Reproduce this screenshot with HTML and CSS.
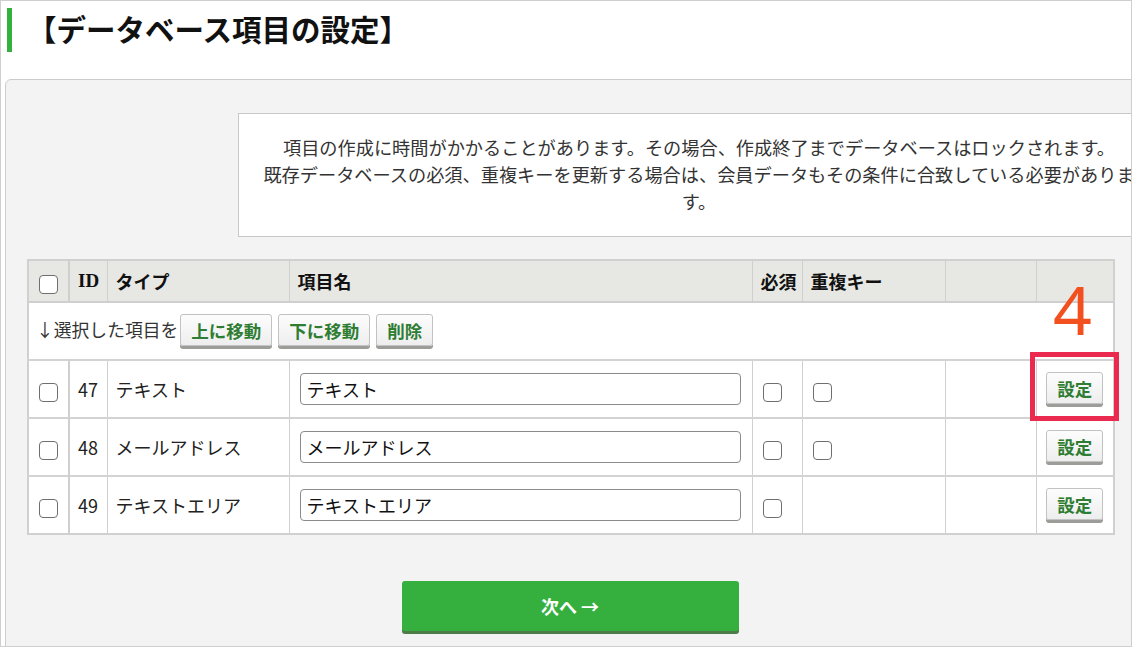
FILE: index.html
```html
<!DOCTYPE html>
<html lang="ja">

<head>
    <meta charset="utf-8">
    <meta name="viewport" content="width=device-width, initial-scale=1.0">
    <title>データベース項目の設定</title>
    <link rel="stylesheet" href="styles.css">
</head>

<body>
    <div class="page">
        <h1 class="titel">【データベース項目の設定】</h1>

        <section class="panel">
            <div class="notice">
                <p>項目の作成に時間がかかることがあります。その場合、作成終了までデータベースはロックされます。</p>
                <p>既存データベースの必須、重複キーを更新する場合は、会員データもその条件に合致している必要があります。</p>
            </div>

            <div class="tabel-wrap">
                <table class="felter">
                    <colgroup>
                        <col style="width:41px">
                        <col style="width:38px">
                        <col style="width:182px">
                        <col style="width:463px">
                        <col style="width:50px">
                        <col style="width:143px">
                        <col style="width:91px">
                        <col style="width:78px">
                    </colgroup>
                    <thead>
                        <tr>
                            <th class="midt"><input type="checkbox" class="boks"></th>
                            <th class="id">ID</th>
                            <th>タイプ</th>
                            <th>項目名</th>
                            <th>必須</th>
                            <th>重複キー</th>
                            <th></th>
                            <th></th>
                        </tr>
                    </thead>
                    <tbody>
                        <tr class="handling">
                            <td colspan="8">↓選択した項目を<button class="knap">上に移動</button>
                                <button class="knap">下に移動</button>
                                <button class="knap">削除</button>
                            </td>
                        </tr>
                        <tr>
                            <td class="midt"><input type="checkbox" class="boks"></td>
                            <td>47</td>
                            <td>テキスト</td>
                            <td class="navn"><input type="text" value="テキスト"></td>
                            <td class="flag"><input type="checkbox" class="boks"></td>
                            <td class="flag"><input type="checkbox" class="boks"></td>
                            <td></td>
                            <td class="midt"><button class="knap">設定</button></td>
                        </tr>
                        <tr>
                            <td class="midt"><input type="checkbox" class="boks"></td>
                            <td>48</td>
                            <td>メールアドレス</td>
                            <td class="navn"><input type="text" value="メールアドレス"></td>
                            <td class="flag"><input type="checkbox" class="boks"></td>
                            <td class="flag"><input type="checkbox" class="boks"></td>
                            <td></td>
                            <td class="midt"><button class="knap">設定</button></td>
                        </tr>
                        <tr>
                            <td class="midt"><input type="checkbox" class="boks"></td>
                            <td>49</td>
                            <td>テキストエリア</td>
                            <td class="navn"><input type="text" value="テキストエリア"></td>
                            <td class="flag"><input type="checkbox" class="boks"></td>
                            <td></td>
                            <td></td>
                            <td class="midt"><button class="knap">設定</button></td>
                        </tr>
                    </tbody>
                </table>

                <div class="naeste">
                    <button class="gaa">次へ →</button>
                </div>
            </div>
        </section>

        <!-- markering oven på skærmbilledet -->
        <span class="trin">4</span>
        <span class="ramme"></span>
    </div>
</body></html>
```

FILE: styles.css
```css
* {
    padding: 0;
    margin: 0;
    box-sizing: border-box;
}

body {
    font-family: "Noto Sans CJK JP", "Noto Sans", sans-serif;
    color: #222;
    background-color: white;
    overflow: hidden;
}

.page {
    position: relative;
    width: 1132px;
    height: 647px;
    border: 1px solid #cfcfcf;
    overflow: hidden;
}

.titel {
    margin: 7px 0 0 6px;
    height: 44px;
    line-height: 40px;
    border-left: 5px solid #35b03f;
    padding-left: 15px;
    font-size: 29.5px;
    font-weight: 700;
    color: #111;
}

.panel {
    margin: 27px 0 0 4px;
    width: 1160px;
    height: 620px;
    background-color: #f3f3f3;
    border: 1px solid #cccccc;
    border-radius: 6px;
}

.notice {
    margin: 33px 0 0 232px;
    width: 922px;
    height: 124px;
    background-color: white;
    border: 1px solid #c8c8c8;
    padding: 20px 20px;
    text-align: center;
    font-size: 18.2px;
    line-height: 27px;
    color: #333;
}

.tabel-wrap {
    margin: 22px 0 0 21px;
    width: 1086px;
}

.felter {
    width: 1086px;
    table-layout: fixed;
    border-collapse: collapse;
    background-color: white;
    border: 2px solid #d0d0d0;
    font-size: 18px;
    color: #222;
}

.felter th {
    height: 42px;
    background-color: #e7e8e4;
    border-left: 1px solid #cfcfcf;
    border-bottom: 2px solid #cfcfcf;
    text-align: left;
    padding: 0 8px;
    font-weight: 700;
    color: #111;
    white-space: nowrap;
    overflow: hidden;
}

.felter th.id {
    font-family: "Liberation Serif", serif;
    font-size: 19px;
}

.felter td {
    height: 58px;
    border-top: 2px solid #d3d3d3;
    border-left: 1px solid #d0d0d0;
    padding: 0 8px;
    vertical-align: middle;
}

.felter th:first-child,
.felter td:first-child {
    border-right: 2px solid #cfcfcf;
}

.felter .midt {
    text-align: center;
    padding: 0;
}

.felter .flag {
    padding: 0 10px;
}

.felter .navn {
    padding: 0 11px 0 10px;
}

.handling td {
    padding-left: 7px;
    color: #333;
    font-size: 17.8px;
}

.boks {
    appearance: none;
    display: inline-block;
    width: 19px;
    height: 19px;
    border: 1px solid #6f6f6f;
    border-radius: 4px;
    background-color: white;
    vertical-align: middle;
}

.navn input {
    width: 100%;
    height: 32px;
    border: 1px solid #8a8a8a;
    border-radius: 4px;
    padding: 0 6px;
    font-family: inherit;
    font-size: 18px;
    color: #111;
    background-color: white;
}

.knap {
    height: 32px;
    padding: 0 10px;
    border: 1px solid #c2c2c2;
    border-radius: 3px;
    background: linear-gradient(#fdfdfd, #eeeeee);
    box-shadow: 0 3px 0 #9c9c98;
    font-family: inherit;
    font-size: 17.5px;
    font-weight: 700;
    color: #2e7d32;
    vertical-align: middle;
    margin-top: -3px;
}

.handling .knap {
    margin-left: 2px;
}

.naeste {
    margin-top: 46px;
    text-align: center;
}

.gaa {
    width: 337px;
    height: 50px;
    border: none;
    border-radius: 3px;
    background-color: #35b03f;
    box-shadow: 0 3px 0 #4c7c47;
    color: white;
    font-family: inherit;
    font-size: 18px;
    font-weight: 700;
}

.trin {
    position: absolute;
    left: 1052px;
    top: 274px;
    font-family: "Noto Sans", sans-serif;
    font-size: 68px;
    font-weight: 400;
    line-height: 1;
    color: #f2501f;
}

.ramme {
    position: absolute;
    left: 1029px;
    top: 351px;
    width: 89px;
    height: 69px;
    border: 5px solid #ea2a4f;
}
```
